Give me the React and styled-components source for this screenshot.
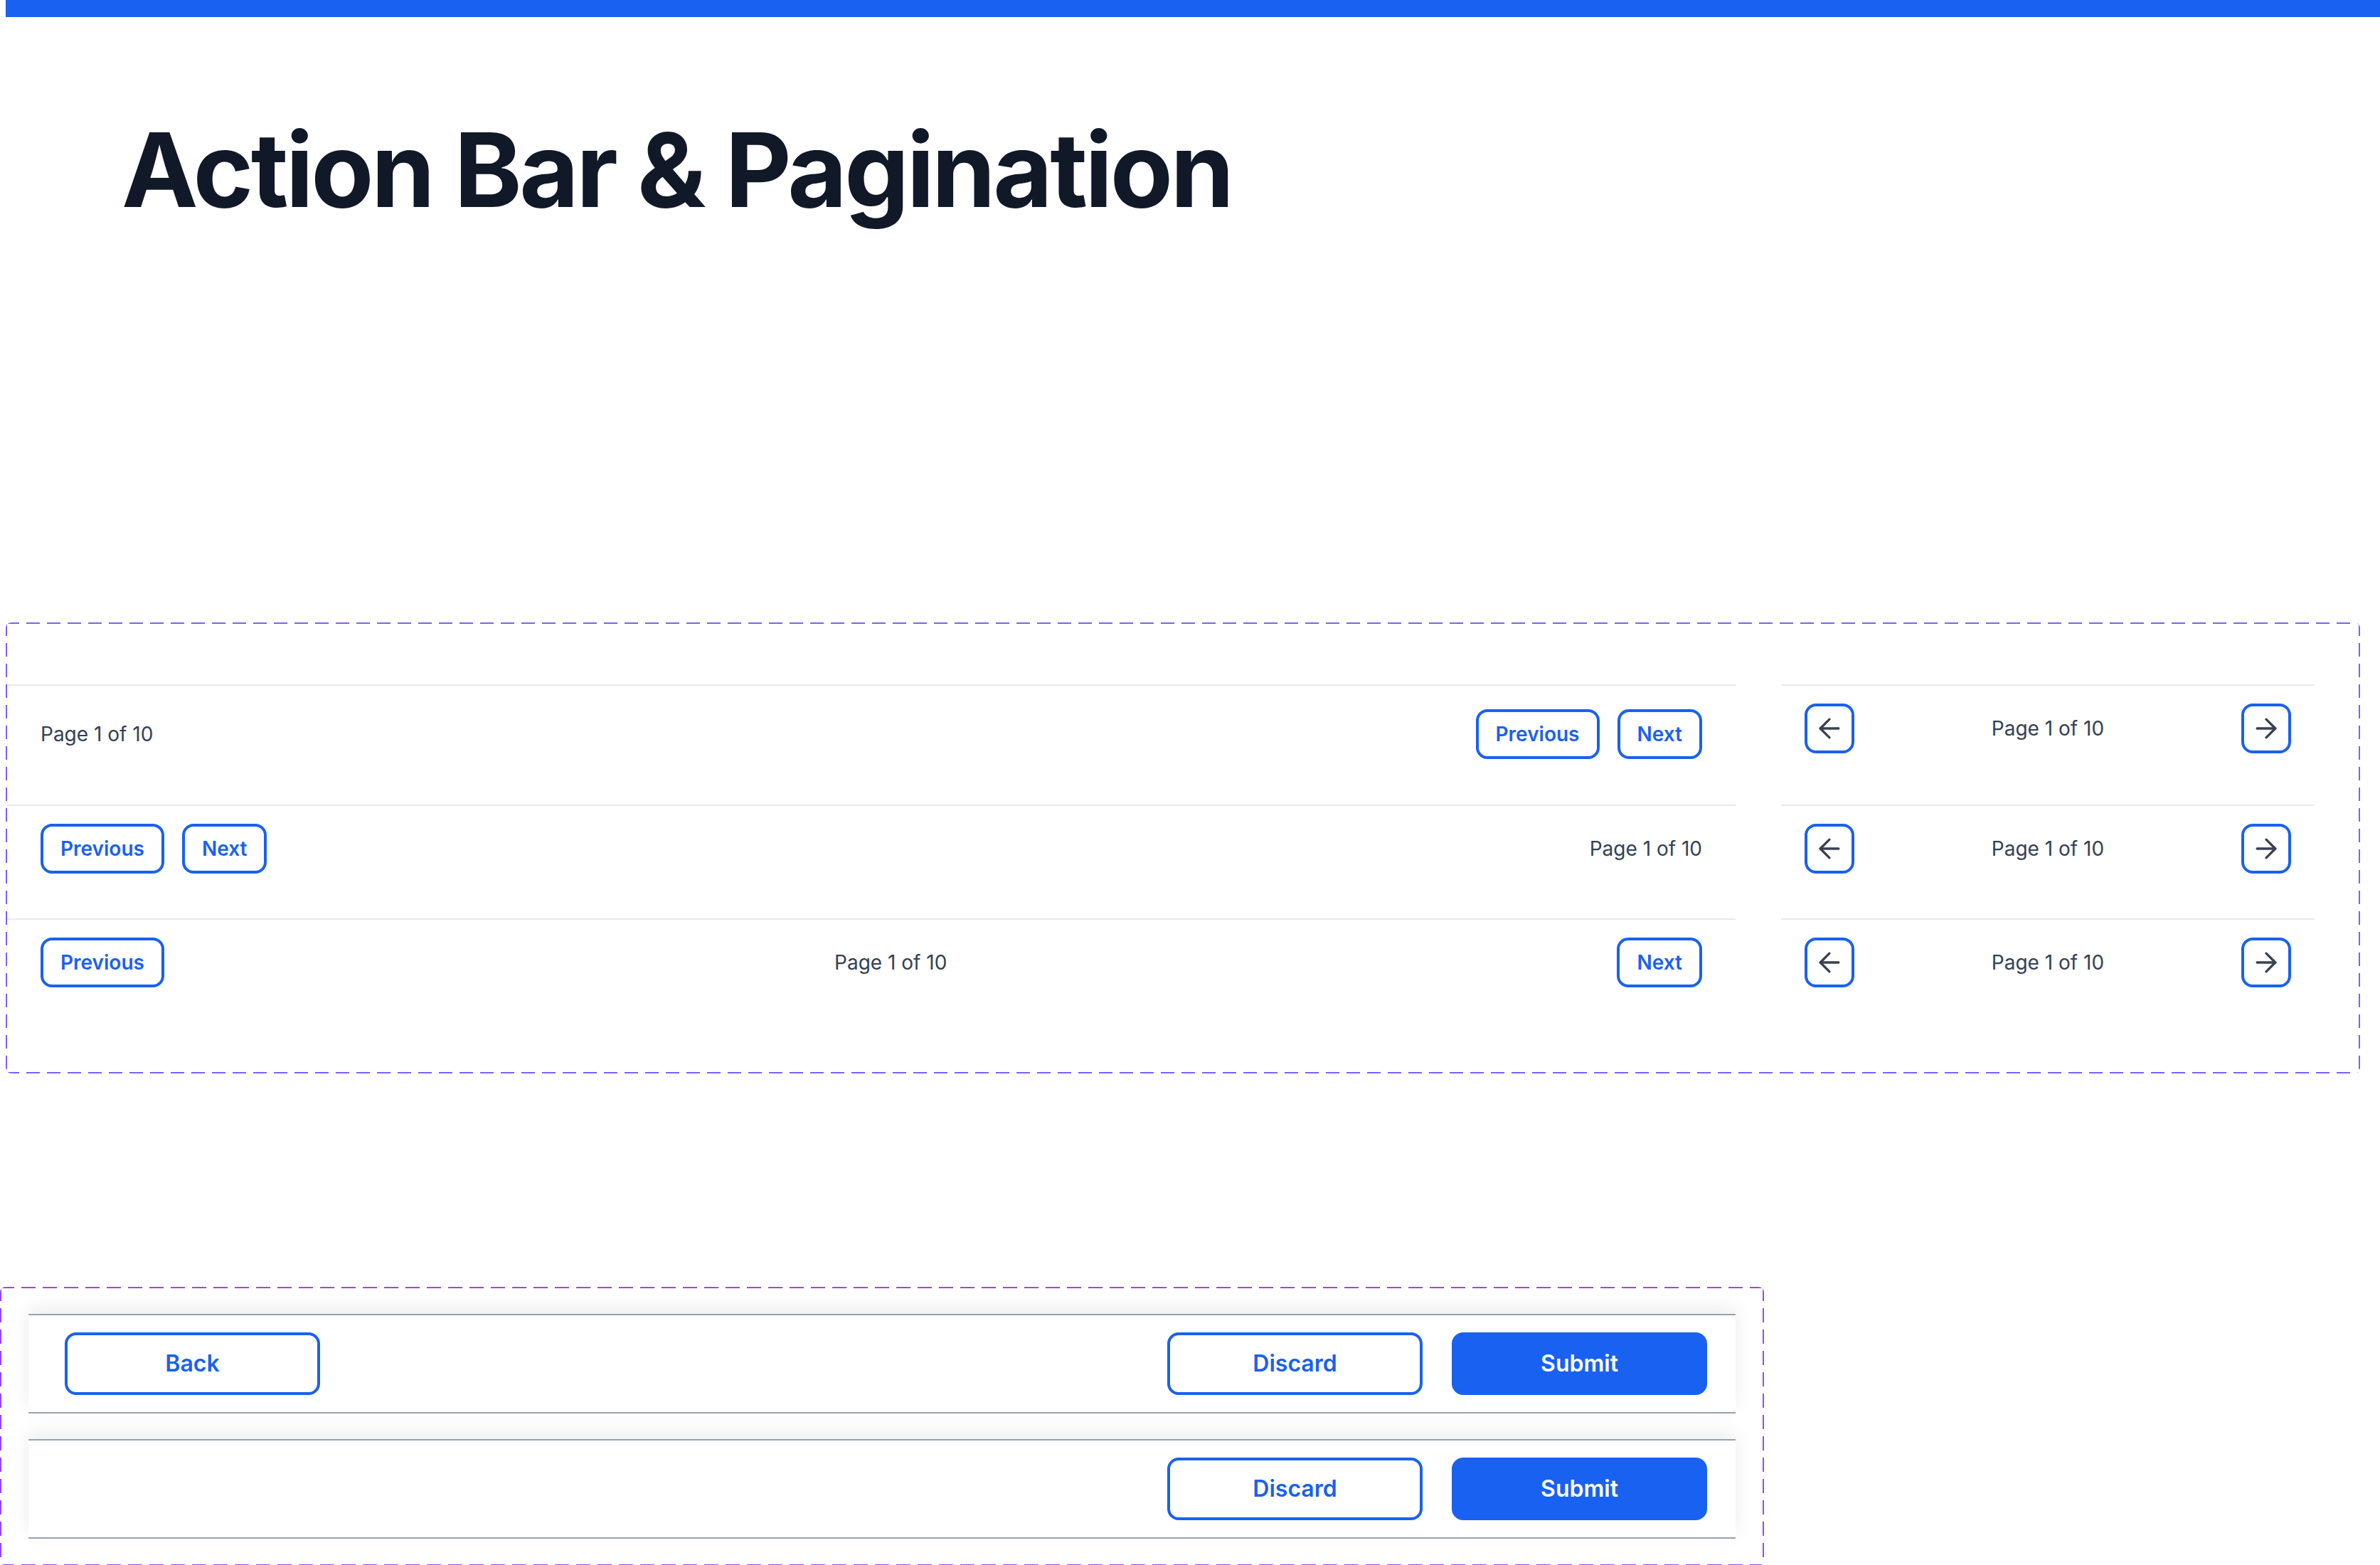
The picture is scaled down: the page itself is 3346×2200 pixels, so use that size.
import React from "react";
import styled, { createGlobalStyle, css } from "styled-components";
import { ArrowLeft, ArrowRight } from "lucide-react";

const BLUE = "#1961f0";
const INK = "#111827";
const MUTED = "#344054";

const GlobalStyle = createGlobalStyle`
  html, body {
    margin: 0;
    padding: 0;
    background: #ffffff;
  }
  body {
    font-family: Inter, "Noto Sans", sans-serif;
    color: ${INK};
  }
  * {
    box-sizing: border-box;
  }
`;

// long-dash frame used around each component set
const dashedFrame = (color, dash, gap) => {
  const h = `repeating-linear-gradient(90deg, ${color} 0 ${dash}px, transparent ${dash}px ${dash + gap}px)`;
  const v = `repeating-linear-gradient(180deg, ${color} 0 ${dash}px, transparent ${dash}px ${dash + gap}px)`;
  return css`
    background-color: #ffffff;
    background-image: ${h}, ${h}, ${v}, ${v};
    background-position: top left, bottom left, top left, top right;
    background-size: 100% 2px, 100% 2px, 2px 100%, 2px 100%;
    background-repeat: no-repeat;
    border-radius: 8px;
  `;
};

const Page = styled.div`
  width: 3346px;
  min-height: 2200px;
`;

const TopBar = styled.div`
  height: 24px;
  margin-left: 8px;
  background: ${BLUE};
`;

const Title = styled.h1`
  margin: 143px 0 0 171px;
  font-size: 144px;
  line-height: 1;
  font-weight: 700;
  letter-spacing: -0.025em;
  color: ${INK};
`;

const PaginationFrame = styled.section`
  ${dashedFrame("#7b61ff", 19, 10)}
  width: 3310px;
  margin: 564px 0 0 8px;
  padding: 87px 64px 58px 2px;
  display: flex;
  gap: 64px;
`;

const Column = styled.div`
  display: flex;
  flex-direction: column;
  flex: ${(p) => (p.$width ? `0 0 ${p.$width}px` : "1")};
`;

const Row = styled.div`
  display: flex;
  align-items: center;
  justify-content: space-between;
  border-top: 2px solid #e8eaee;
  padding: ${(p) => p.$top}px ${(p) => p.$side}px ${(p) => p.$bottom}px;
`;

const Group = styled.div`
  display: flex;
  align-items: center;
  gap: ${(p) => p.$gap}px;
`;

const PageLabel = styled.span`
  font-size: 28px;
  line-height: 1;
  font-weight: 400;
  color: ${MUTED};
`;

const PageButton = styled.button`
  display: inline-flex;
  align-items: center;
  justify-content: center;
  height: 70px;
  padding: 0 24px;
  border: 4px solid ${BLUE};
  border-radius: 16px;
  background: #ffffff;
  color: ${BLUE};
  font-family: Inter, sans-serif;
  font-size: 28px;
  font-weight: 600;
  line-height: 1;
  cursor: pointer;
`;

const IconButton = styled(PageButton)`
  width: 70px;
  padding: 0;
  color: #374151;
`;

const ActionFrame = styled.section`
  ${dashedFrame("#9747ff", 20, 10)}
  width: 2480px;
  margin-top: 300px;
  padding: 38px 40px;
  display: flex;
  flex-direction: column;
  gap: 36px;
`;

const ActionBar = styled.div`
  display: flex;
  align-items: center;
  justify-content: ${(p) => p.$justify};
  padding: 24px 40px 24px 51px;
  background: #ffffff;
  border-top: 2px solid #98a1b0;
  border-bottom: 2px solid #98a1b0;
  box-shadow: 0 -8px 24px rgba(16, 24, 40, 0.08);
`;

const ActionButton = styled.button`
  display: inline-flex;
  align-items: center;
  justify-content: center;
  width: 359px;
  height: 88px;
  border: 4px solid ${BLUE};
  border-radius: 16px;
  background: ${(p) => (p.$primary ? BLUE : "#ffffff")};
  color: ${(p) => (p.$primary ? "#ffffff" : BLUE)};
  font-family: Inter, sans-serif;
  font-size: 32px;
  font-weight: 600;
  line-height: 1;
  cursor: pointer;
`;

const label = "Page 1 of 10";

function ArrowRow({ top, bottom }) {
  return (
    <Row $top={top} $bottom={bottom} $side={33}>
      <IconButton aria-label="Previous page">
        <ArrowLeft size={44} strokeWidth={1.8} />
      </IconButton>
      <PageLabel>{label}</PageLabel>
      <IconButton aria-label="Next page">
        <ArrowRight size={44} strokeWidth={1.8} />
      </IconButton>
    </Row>
  );
}

export default function App() {
  return (
    <Page>
      <GlobalStyle />
      <TopBar />
      <Title>Action Bar &amp; Pagination</Title>

      <PaginationFrame>
        <Column>
          <Row $top={33} $bottom={64} $side={47}>
            <PageLabel>{label}</PageLabel>
            <Group $gap={25}>
              <PageButton>Previous</PageButton>
              <PageButton>Next</PageButton>
            </Group>
          </Row>
          <Row $top={25} $bottom={63} $side={47}>
            <Group $gap={25}>
              <PageButton>Previous</PageButton>
              <PageButton>Next</PageButton>
            </Group>
            <PageLabel>{label}</PageLabel>
          </Row>
          <Row $top={25} $bottom={63} $side={47}>
            <PageButton>Previous</PageButton>
            <PageLabel>{label}</PageLabel>
            <PageButton>Next</PageButton>
          </Row>
        </Column>

        <Column $width={750}>
          <ArrowRow top={25} bottom={72} />
          <ArrowRow top={25} bottom={63} />
          <ArrowRow top={25} bottom={63} />
        </Column>
      </PaginationFrame>

      <ActionFrame>
        <ActionBar $justify="space-between">
          <ActionButton>Back</ActionButton>
          <Group $gap={41}>
            <ActionButton>Discard</ActionButton>
            <ActionButton $primary>Submit</ActionButton>
          </Group>
        </ActionBar>
        <ActionBar $justify="flex-end">
          <Group $gap={41}>
            <ActionButton>Discard</ActionButton>
            <ActionButton $primary>Submit</ActionButton>
          </Group>
        </ActionBar>
      </ActionFrame>
    </Page>
  );
}
